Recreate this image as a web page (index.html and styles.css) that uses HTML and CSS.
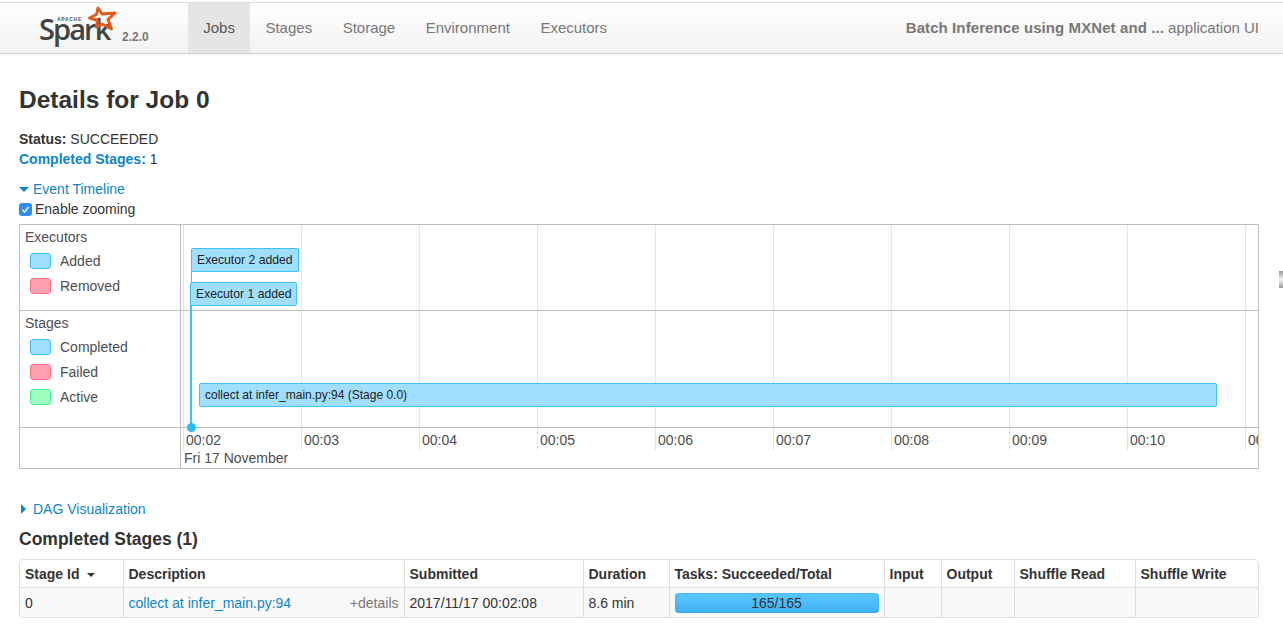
FILE: index.html
```html
<!DOCTYPE html>
<html lang="en">
<head>
    <meta charset="UTF-8">
    <meta name="viewport" content="width=device-width, initial-scale=1.0">
    <title>Details for Job 0</title>
    <link rel="stylesheet" href="styles.css">
</head>
<body>

    <!-- Top navigation -->
    <nav class="navbar">
        <a class="brand">
            <span class="brand-apache">APACHE</span>
            <span class="brand-name">Spark</span>
            <svg class="brand-star" width="30" height="30" viewBox="0 0 30 30">
                <path d="M11 4 L15 10 L28 9 L21 15.5 L24.5 25 L15 20 L9.5 23 L10.5 16.5 L2.5 14 L9.5 10.5 Z" fill="none" stroke="#e25a1c" stroke-width="3" stroke-linejoin="round"/>
            </svg>
            <span class="brand-version">2.2.0</span>
        </a>
        <ul class="nav-links">
            <li class="active">Jobs</li>
            <li>Stages</li>
            <li>Storage</li>
            <li>Environment</li>
            <li>Executors</li>
        </ul>
        <p class="nav-app"><strong>Batch Inference using MXNet and ...</strong> application UI</p>
    </nav>

    <div class="scroll-handle"></div>

    <main class="container">
        <h1>Details for Job 0</h1>

        <ul class="summary">
            <li><strong>Status:</strong> SUCCEEDED</li>
            <li><a class="link"><strong>Completed Stages:</strong></a> 1</li>
        </ul>

        <div class="toggle toggle-timeline">
            <span class="arrow-down"></span>
            <a class="link">Event Timeline</a>
        </div>
        <div class="zoom-option">
            <span class="checkbox">
                <svg width="13" height="13" viewBox="0 0 13 13">
                    <path d="M3.5 6.8 L5.6 9.2 L9.6 3.8" fill="none" stroke="#fff" stroke-width="1.4"/>
                </svg>
            </span>
            Enable zooming
        </div>

        <!-- Event timeline -->
        <div class="timeline">
            <div class="legend legend-executors">
                <div class="legend-title">Executors</div>
                <div class="legend-item"><span class="swatch blue"></span>Added</div>
                <div class="legend-item"><span class="swatch red"></span>Removed</div>
            </div>
            <div class="legend legend-stages">
                <div class="legend-title">Stages</div>
                <div class="legend-item"><span class="swatch blue"></span>Completed</div>
                <div class="legend-item"><span class="swatch red"></span>Failed</div>
                <div class="legend-item"><span class="swatch green"></span>Active</div>
            </div>
            <div class="legend legend-axis"></div>

            <div class="canvas">
                <div class="canvas-row row-executors"></div>
                <div class="canvas-row row-stages"></div>
                <div class="axis">
                    <div class="axis-ticks">
                        <span>00:02</span>
                        <span>00:03</span>
                        <span>00:04</span>
                        <span>00:05</span>
                        <span>00:06</span>
                        <span>00:07</span>
                        <span>00:08</span>
                        <span>00:09</span>
                        <span>00:10</span>
                        <span>00:11</span>
                    </div>
                    <div class="axis-date">Fri 17 November</div>
                </div>

                <div class="event-line line-two"></div>
                <div class="event-line line-one"></div>
                <div class="event-dot"></div>
                <div class="event event-two">Executor 2 added</div>
                <div class="event event-one">Executor 1 added</div>
                <div class="event stage-bar">collect at infer_main.py:94 (Stage 0.0)</div>
            </div>
        </div>

        <div class="toggle toggle-dag">
            <span class="arrow-right"></span>
            <a class="link">DAG Visualization</a>
        </div>

        <h2>Completed Stages (1)</h2>

        <!-- Stage table -->
        <div class="table-wrap">
            <table>
                <colgroup>
                    <col class="col-id">
                    <col class="col-desc">
                    <col class="col-submitted">
                    <col class="col-duration">
                    <col class="col-tasks">
                    <col class="col-input">
                    <col class="col-output">
                    <col class="col-read">
                    <col class="col-write">
                </colgroup>
                <thead>
                    <tr>
                        <th>Stage Id <span class="sort-arrow"></span></th>
                        <th>Description</th>
                        <th>Submitted</th>
                        <th>Duration</th>
                        <th>Tasks: Succeeded/Total</th>
                        <th>Input</th>
                        <th>Output</th>
                        <th>Shuffle Read</th>
                        <th>Shuffle Write</th>
                    </tr>
                </thead>
                <tbody>
                    <tr>
                        <td>0</td>
                        <td>
                            <div class="desc-cell">
                                <a class="link">collect at infer_main.py:94</a>
                                <span class="details">+details</span>
                            </div>
                        </td>
                        <td>2017/11/17 00:02:08</td>
                        <td>8.6 min</td>
                        <td><div class="progress">165/165</div></td>
                        <td></td>
                        <td></td>
                        <td></td>
                        <td></td>
                    </tr>
                </tbody>
            </table>
        </div>
    </main>

</body>
</html>
```

FILE: styles.css
```css
/* Spark job page */
body {
    font-family: "Liberation Sans", Arial, sans-serif;
    font-size: 14px;
    line-height: 20px;
    color: #333;
    background-color: #fff;
    margin: 0;
    padding: 0;
    overflow: hidden;
}

.link {
    color: #0d85c8;
}

/* Navbar */
.navbar {
    display: flex;
    align-items: stretch;
    height: 50px;
    margin-top: 2px;
    border-top: 1px solid #dcdcdc;
    border-bottom: 1px solid #d4d4d4;
    background: linear-gradient(to bottom, #ffffff, #f2f2f2);
    box-shadow: 0 1px 4px rgba(0, 0, 0, 0.06);
}

.brand {
    position: relative;
    width: 188px;
    flex-shrink: 0;
}

.brand-name {
    position: absolute;
    left: 39px;
    top: 11px;
    font-family: "Open Sans", sans-serif;
    font-size: 29px;
    font-weight: 600;
    line-height: 30px;
    letter-spacing: -1.9px;
    color: #444;
}

.brand-apache {
    position: absolute;
    left: 57px;
    top: 13px;
    font-size: 5px;
    line-height: 6px;
    font-weight: bold;
    letter-spacing: 0.7px;
    color: #555;
}

.brand-star {
    position: absolute;
    left: 87px;
    top: 1px;
}

.brand-version {
    position: absolute;
    left: 122px;
    top: 24px;
    font-size: 12px;
    font-weight: bold;
    color: #777;
}

.nav-links {
    display: flex;
    list-style: none;
    margin: 0;
    padding: 0;
}

.nav-links li {
    padding: 0 15.25px;
    font-size: 15px;
    line-height: 49px;
    color: #777;
}

.nav-links li.active {
    color: #555;
    background-color: #e5e5e5;
}

.nav-app {
    margin: 0 24px 0 auto;
    font-size: 15px;
    line-height: 49px;
    color: #777;
}

.nav-app strong {
    letter-spacing: 0.09px;
}

.scroll-handle {
    position: absolute;
    left: 1279px;
    top: 271px;
    width: 4px;
    height: 17px;
    background: linear-gradient(to bottom, #999, #f2f2f2 50%, #999);
}

/* Page content */
.container {
    padding: 0 24px 0 19px;
}

h1 {
    font-size: 24.5px;
    line-height: 30px;
    font-weight: bold;
    margin: 31px 0 0 0;
}

h2 {
    font-size: 17.5px;
    line-height: 20px;
    font-weight: bold;
    margin: 10px 0 10px 0;
}

.summary {
    list-style: none;
    margin: 14px 0 0 0;
    padding: 0;
}

.toggle {
    display: flex;
    align-items: center;
}

.toggle-timeline {
    margin-top: 10px;
}

.toggle-dag {
    margin-top: 30px;
}

.arrow-down {
    width: 0;
    height: 0;
    margin: 0 4px 0 0;
    border-left: 5px solid transparent;
    border-right: 5px solid transparent;
    border-top: 5px solid #0d85c8;
}

.arrow-right {
    width: 0;
    height: 0;
    margin: 0 7px 0 2px;
    border-top: 5px solid transparent;
    border-bottom: 5px solid transparent;
    border-left: 5px solid #0d85c8;
}

.zoom-option {
    display: flex;
    align-items: center;
    gap: 3px;
    height: 20px;
}

.checkbox {
    display: block;
    width: 13px;
    height: 13px;
    border-radius: 3px;
    background-color: #2f8ff0;
}

.checkbox svg {
    display: block;
}

/* Timeline */
.timeline {
    display: grid;
    grid-template-columns: 161px 1fr;
    grid-template-rows: 86px 117px 40px;
    margin-top: 5px;
    border: 1px solid #bfbfbf;
    color: #4d4d4d;
}

.legend {
    grid-column: 1;
    border-right: 1px solid #bfbfbf;
    padding: 2px 0 0 5px;
}

.legend-executors,
.legend-stages {
    border-bottom: 1px solid #bfbfbf;
}

.legend-title {
    height: 20px;
    line-height: 20px;
    margin-bottom: 1px;
}

.legend-item {
    display: flex;
    align-items: center;
    height: 25px;
    padding-left: 5px;
}

.swatch {
    width: 19px;
    height: 14px;
    margin-right: 9px;
    border: 1px solid;
    border-radius: 3px;
}

.swatch.blue {
    background-color: #a0dfff;
    border-color: #3ec0ff;
}

.swatch.red {
    background-color: #ffa0b0;
    border-color: #ff7088;
}

.swatch.green {
    background-color: #a0ffc0;
    border-color: #40f090;
}

.canvas {
    grid-column: 2;
    grid-row: 1 / 4;
    position: relative;
    overflow: hidden;
    display: grid;
    grid-template-rows: 86px 117px 40px;
    background-image: repeating-linear-gradient(to right, #e4e4e4 0, #e4e4e4 1px, transparent 1px, transparent 118px);
    background-position: 2px 0;
    background-size: 100% 225px;
    background-repeat: no-repeat;
}

.canvas-row {
    border-bottom: 1px solid #bfbfbf;
}

.axis-ticks {
    display: flex;
    padding: 2px 0 0 5px;
    height: 20px;
}

.axis-ticks span {
    flex: 0 0 118px;
}

.axis-date {
    padding-left: 3px;
    margin-top: -2px;
}

.event {
    position: absolute;
    height: 22px;
    line-height: 22px;
    padding: 0 5px;
    font-size: 12.2px;
    color: #222;
    background-color: #a0dfff;
    border: 1px solid #3ec0ff;
    border-radius: 2px;
    white-space: nowrap;
}

.event-two {
    left: 10px;
    top: 23px;
}

.event-one {
    left: 9px;
    top: 57px;
    padding-right: 4px;
}

.stage-bar {
    left: 18px;
    top: 158px;
    width: 1006px;
    font-size: 12px;
}

.event-line {
    position: absolute;
    width: 1px;
    background-color: #3ec0ff;
}

.line-two {
    left: 10px;
    top: 46px;
    height: 12px;
}

.line-one {
    left: 9px;
    top: 80px;
    height: 122px;
    width: 2px;
}

.event-dot {
    position: absolute;
    left: 6px;
    top: 198px;
    width: 9px;
    height: 9px;
    border-radius: 50%;
    background-color: #2bb8ff;
}

/* Stage table */
.table-wrap {
    border: 1px solid #ddd;
    border-radius: 4px;
    overflow: hidden;
}

table {
    width: 100%;
    border-collapse: collapse;
    table-layout: fixed;
}

.col-id { width: 103px; }
.col-desc { width: 281px; }
.col-submitted { width: 179px; }
.col-duration { width: 86px; }
.col-tasks { width: 215px; }
.col-input { width: 57px; }
.col-output { width: 73px; }
.col-read { width: 121px; }

th, td {
    border-left: 1px solid #ddd;
    padding: 4px 5px;
    text-align: left;
    white-space: nowrap;
}

th:first-child, td:first-child {
    border-left: none;
}

th {
    height: 20px;
    padding-bottom: 3px;
    border-bottom: 1px solid #ddd;
}

td {
    height: 21px;
    background-color: #f9f9f9;
}

.sort-arrow {
    display: inline-block;
    margin-left: 4px;
    vertical-align: middle;
    border-left: 4px solid transparent;
    border-right: 4px solid transparent;
    border-top: 4px solid #333;
}

.desc-cell {
    display: flex;
    justify-content: space-between;
}

.details {
    color: #777;
}

.progress {
    height: 20px;
    line-height: 20px;
    text-align: center;
    border-radius: 4px;
    color: #333;
    background: linear-gradient(to bottom, #5ac8ff, #3fb0f0);
    box-shadow: inset 0 0 0 1px rgba(40, 140, 220, 0.25);
}
```
